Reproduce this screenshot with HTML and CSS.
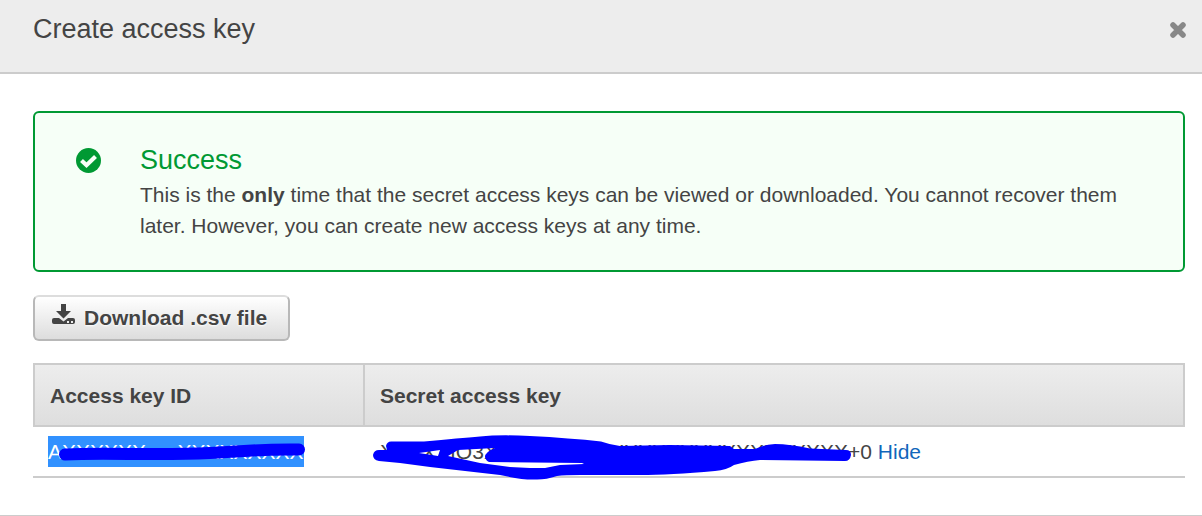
FILE: index.html
```html
<!DOCTYPE html>
<html lang="en">
<head>
<meta charset="utf-8">
<title>Create access key</title>
<link rel="stylesheet" href="styles.css">
</head>
<body>
<header class="header">
  <h1 class="title">Create access key</h1>
  <button class="close" type="button" aria-label="Close">
    <svg width="16" height="16" viewBox="0 0 16 16" aria-hidden="true"><path d="M3 3l10 10M13 3L3 13" fill="none" stroke="#888" stroke-width="5.500" stroke-linecap="round"/></svg>
  </button>
</header>
<main class="content">
  <section class="alert">
    <svg class="alert-icon" width="26" height="26" viewBox="0 0 26 26" aria-hidden="true"><circle cx="12.500" cy="12.500" r="12.500" fill="#093"/><path d="M5.500 12.500l5 4.700L19.500 8.500" fill="none" stroke="#f6fff7" stroke-width="4.200"/></svg>
    <div>
      <h2 class="alert-title">Success</h2>
      <p class="alert-text">This is the <strong>only</strong> time that the secret access keys can be viewed or downloaded. You cannot recover them later. However, you can create new access keys at any time.</p>
    </div>
  </section>
  <button class="download" type="button">
    <svg width="23" height="21" viewBox="0 0 23 21" aria-hidden="true"><path d="M9 0h5v7h5l-7.500 7.500L4 7h5zM2 14h5l4.500 3.500L16 14h5q2 0 2 2v2q0 2-2 2H2q-2 0-2-2v-2q0-2 2-2z" fill="#444"/><path d="M15 17h2v2h-2zM19 17h2v2h-2z" fill="#eee"/></svg>
    <span>Download .csv file</span>
  </button>
  <table class="keys">
    <thead>
      <tr><th class="id-column" scope="col">Access key ID</th><th scope="col">Secret access key</th></tr>
    </thead>
    <tbody>
      <tr>
        <td>
          <span class="selected">AXXXXXXxxxXXXXXXXXX</span>
          <svg class="redaction" width="290" height="60" viewBox="33 427 290 60" aria-hidden="true"><path d="M65 454.500C110 452 150 456 210 453S260 449 299 449.500" fill="none" stroke="#00f" stroke-width="12" stroke-linecap="round"/></svg>
        </td>
        <td>
          <span>XXXXXIO3XXXXXXXXXXXXXXXXXXXXXXXXXX+0</span> <a class="link" href="#">Hide</a>
          <svg class="redaction" width="500" height="60" viewBox="365 427 500 60" aria-hidden="true"><path fill="#00f" fill-rule="evenodd" d="M386 446Q387 441 392 441.500L424 441.500Q460 438 480 436.500Q500 434.500 530 436Q570 438 601 441.500Q611 445 620 446L670 445L730 446L734 449L755 449Q763 445 775 444Q790 444 810 448.500L846 450Q851 450 851 455Q850 461 845 461L760 460Q748 461 734 465Q727 470 715 471Q670 475 640 475L580 475Q565 475 557 476Q545 480 535 479.500Q522 480 500 475L430 467L400 463L379 461Q373 460 373 455Q374 450 379 450L387 450ZM419 453L440 450L438 456ZM448 456L458 450L495 448Q485 452 485 457Q486 461 489 462L582 463L584 464L560 465L545 468L530 468L510 467L480 463Z"/></svg>
        </td>
      </tr>
    </tbody>
  </table>
</main>
</body>
</html>
```
FILE: styles.css
```css
* { box-sizing: border-box; }
body {
  margin: 0;
  background: #fff;
  color: #444;
  font: 21px/31px "Liberation Sans", Arial, sans-serif;
}
h1, h2, p { margin: 0; font-weight: 400; }
.header {
  display: flex;
  justify-content: space-between;
  align-items: flex-start;
  padding: 14px 16px 27px 33px;
  background: #ededed;
  border-bottom: 2px solid #ccc;
}
.title, .alert-title { font-size: 27px; line-height: 31px; }
.close {
  display: flex;
  margin-top: 8px;
  padding: 0;
  border: 0;
  background: none;
}
.content {
  padding: 37px 17px 37px 33px;
  border-bottom: 1px solid #ccc;
}
.alert {
  display: flex;
  gap: 38px;
  padding: 32px 40px 29px 41px;
  border: 2px solid #093;
  border-radius: 6px;
  background: #f6fff7;
}
.alert-icon { flex: none; margin-top: 3px; }
.alert-title { padding-bottom: 3px; color: #093; }
.download {
  display: flex;
  align-items: center;
  gap: 9px;
  height: 46px;
  margin: 23px 0 22px;
  padding: 0 21px 2px 17px;
  border: 2px solid #b8b8b8;
  border-top-color: #ddd;
  border-radius: 6px;
  background: linear-gradient(#fff, #ddd);
  color: #444;
  font: bold 21px/31px "Liberation Sans", Arial, sans-serif;
  text-shadow: 0 1px 2px #fff;
}
.download svg { margin-bottom: 5px; }
.keys {
  width: 100%;
  border-collapse: separate;
  border-spacing: 0;
}
.keys th {
  height: 64px;
  padding: 0 15px;
  border: 2px solid #ccc;
  border-left-width: 0;
  background: linear-gradient(#ededed, #dedede);
  text-align: left;
}
.keys .id-column { width: 332px; border-left-width: 2px; }
.keys td {
  position: relative;
  height: 51px;
  padding: 0 15px;
  border-bottom: 2px solid #ccc;
  white-space: nowrap;
}
.selected {
  display: inline-block;
  background: #3191ff;
  color: #fff;
}
.redaction { position: absolute; top: 0; left: 0; }
.link { color: #1166bb; text-decoration: none; }
```
